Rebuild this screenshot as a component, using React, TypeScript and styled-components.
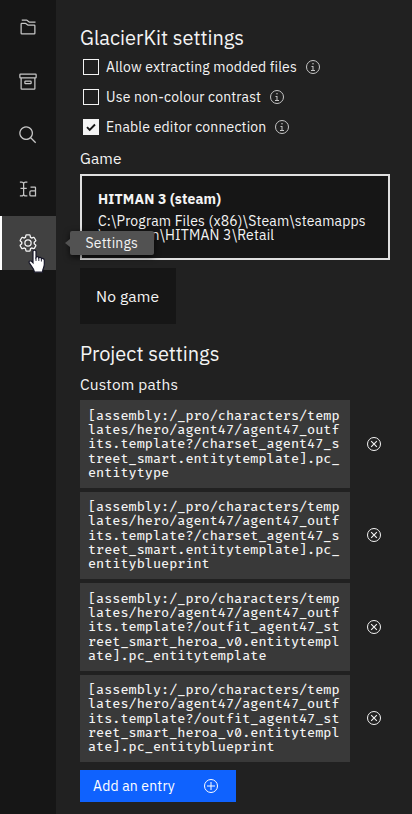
import React from "react";
import styled, { createGlobalStyle } from "styled-components";

const GlobalStyle = createGlobalStyle`
  * { box-sizing: border-box; }
  body {
    margin: 0;
    background: #212121;
    color: #f4f4f4;
    font-family: "IBM Plex Sans", "Inter", "Liberation Sans", sans-serif;
    font-size: 14px;
    overflow: hidden;
  }
`;

const Shell = styled.div`
  display: flex;
  width: 412px;
  height: 814px;
  overflow: hidden;
  background: #212121;
`;

const Rail = styled.nav`
  flex: 0 0 56px;
  display: flex;
  flex-direction: column;
  background: #161616;
`;

const RailItem = styled.div<{ $active?: boolean }>`
  position: relative;
  display: flex;
  align-items: center;
  justify-content: center;
  width: 56px;
  height: 54px;
  color: ${(p) => (p.$active ? "#f4f4f4" : "#c6c6c6")};
  background: ${(p) => (p.$active ? "#414141" : "transparent")};
  box-shadow: ${(p) => (p.$active ? "inset 2px 0 0 #ffffff" : "none")};
`;

const Tooltip = styled.div`
  position: absolute;
  z-index: 2;
  left: 70px;
  top: 15px;
  width: 83.5px;
  height: 24px;
  border-radius: 2px;
  background: #525252;
  color: #f4f4f4;
  box-shadow: 0 2px 6px rgba(0, 0, 0, 0.7);
  text-align: center;
  letter-spacing: 0.14px;
  line-height: 25px;
  &::before {
    content: "";
    position: absolute;
    left: -5px;
    top: 8px;
    border-style: solid;
    border-width: 4px 5px 4px 0;
    border-color: transparent #525252 transparent transparent;
  }
`;

const Cursor = styled.svg`
  position: absolute;
  z-index: 3;
  left: 27.5px;
  top: 33px;
`;

const Main = styled.main`
  flex: 1;
  display: flex;
  flex-direction: column;
  align-items: flex-start;
  padding: 24px 22px 0 24px;
`;

const Heading = styled.h4`
  margin: 0;
  height: 28px;
  font-size: 20px;
  font-weight: 400;
  line-height: 28px;
`;

const CheckRow = styled.label`
  display: flex;
  align-items: center;
  height: 30px;
  padding-left: 3px;
  letter-spacing: 0.16px;
  svg { margin-left: 8px; color: #c6c6c6; }
`;

const CheckBox = styled.span<{ $checked?: boolean }>`
  display: flex;
  align-items: center;
  justify-content: center;
  width: 16px;
  height: 16px;
  margin-right: 7px;
  border: 1px solid #f4f4f4;
  background: ${(p) => (p.$checked ? "#f4f4f4" : "transparent")};
  svg { margin: 0; color: #161616; }
`;

const Label = styled.div`
  height: 20px;
  margin-top: 6px;
  font-size: 15.5px;
  letter-spacing: 0.16px;
  line-height: 21px;
`;

const GameTile = styled.div`
  width: 310px;
  height: 86px;
  margin-top: 6px;
  padding: 14px 16px 0;
  border: 2px solid #e0e0e0;
  background: #161616;
`;

const GameName = styled.div`
  font-weight: 700;
  letter-spacing: 0.16px;
  line-height: 18px;
`;

const GamePath = styled.div`
  margin-top: 6px;
  letter-spacing: 0.16px;
  line-height: 14px;
  white-space: nowrap;
`;

const EmptyTile = styled.div`
  width: 96px;
  height: 56px;
  margin: 8px 0 16px;
  padding-left: 16px;
  background: #161616;
  font-size: 15.6px;
  letter-spacing: 0.16px;
  line-height: 57px;
`;

const PathList = styled.div`
  display: flex;
  flex-direction: column;
  gap: 4px;
  margin-top: 6px;
`;

const PathRow = styled.div`
  display: flex;
  align-items: center;
  gap: 16px;
`;

const PathCode = styled.code`
  width: 270px;
  height: 87.5px;
  padding: 8.5px 8px 7.5px;
  background: #393939;
  font-family: "Fira Code", "Fira Mono", "DejaVu Sans Mono", monospace;
  font-size: 13.2px;
  font-weight: 450;
  line-height: 14.35px;
  font-variant-ligatures: none;
  word-break: break-all;
`;

const AddButton = styled.button`
  display: flex;
  align-items: center;
  justify-content: space-between;
  width: 156px;
  height: 32px;
  margin-top: 8px;
  padding: 0 17px 0 13px;
  border: 0;
  background: #0f62fe;
  color: #ffffff;
  font: inherit;
  letter-spacing: 0.16px;
`;

type IconProps = { size?: number; children: React.ReactNode };

const Icon = ({ size = 20, children }: IconProps) => (
  <svg width={size} height={size} viewBox="0 0 32 32" fill="currentColor">
    {children}
  </svg>
);

const FoldersIcon = () => (
  <Icon>
    <path d="M26,28H6a2,2,0,0,1-2-2V11A2,2,0,0,1,6,9h5.67a2,2,0,0,1,1.2.4L16.33,12H26a2,2,0,0,1,2,2V26A2,2,0,0,1,26,28ZM11.67,11H6L6,26H26V14H15.67Z" />
    <path d="M28,9H17.67l-4-3H6V4h7.67a2,2,0,0,1,1.2.4L18.33,7H28Z" />
  </Icon>
);

const ArchiveIcon = () => (
  <Icon>
    <path fillRule="evenodd" d="M20,21H12a2,2,0,0,1-2-2V17a2,2,0,0,1,2-2h8a2,2,0,0,1,2,2v2A2,2,0,0,1,20,21Zm-8-4v2h8V17Z" />
    <path fillRule="evenodd" d="M28,4H4A2,2,0,0,0,2,6v4a2,2,0,0,0,2,2V28a2,2,0,0,0,2,2H26a2,2,0,0,0,2-2V12a2,2,0,0,0,2-2V6A2,2,0,0,0,28,4ZM26,28H6V12H26Zm2-18H4V6H28Z" />
  </Icon>
);

const SearchIcon = () => (
  <Icon>
    <path d="M29,27.59l-7.55-7.56a11,11,0,1,0-1.42,1.42L27.59,29ZM4,13a9,9,0,1,1,9,9A9,9,0,0,1,4,13Z" />
  </Icon>
);

const TextCursorIcon = () => (
  <Icon>
    <path d="M27,12H20v2h7v4H21a3,3,0,0,0-3,3v4a3,3,0,0,0,3,3h8V14A2,2,0,0,0,27,12Zm0,14H21a1,1,0,0,1-1-1V21a1,1,0,0,1,1-1h6Z" />
    <path d="M10,14V8a2,2,0,0,1,2-2h3V4H12a4,4,0,0,0-3,1.36A4,4,0,0,0,6,4H3V6H6A2,2,0,0,1,8,8v6H4v2H8v8a2,2,0,0,1-2,2H3v2H6a4,4,0,0,0,3-1.36A4,4,0,0,0,12,28h3V26H12a2,2,0,0,1-2-2V16h4V14Z" />
  </Icon>
);

const SettingsIcon = () => (
  <Icon>
    <path d="M27,16.76c0-.25,0-.5,0-.76s0-.51,0-.77l1.92-1.68A2,2,0,0,0,29.3,11L26.94,7a2,2,0,0,0-1.73-1,2,2,0,0,0-.64.1l-2.43.82a11.35,11.35,0,0,0-1.31-.75l-.51-2.52a2,2,0,0,0-2-1.61H13.64a2,2,0,0,0-2,1.61l-.51,2.52a11.48,11.48,0,0,0-1.32.75L7.43,6.06A2,2,0,0,0,6.79,6,2,2,0,0,0,5.06,7L2.7,11a2,2,0,0,0,.41,2.51L5,15.24c0,.25,0,.5,0,.76s0,.51,0,.77L3.11,18.45A2,2,0,0,0,2.7,21L5.06,25a2,2,0,0,0,1.73,1,2,2,0,0,0,.64-.1l2.43-.82a11.35,11.35,0,0,0,1.31.75l.51,2.52a2,2,0,0,0,2,1.61h4.72a2,2,0,0,0,2-1.61l.51-2.52a11.48,11.48,0,0,0,1.32-.75l2.42.82a2,2,0,0,0,.64.1,2,2,0,0,0,1.73-1L29.3,21a2,2,0,0,0-.41-2.51ZM25.21,24l-3.43-1.16a8.86,8.86,0,0,1-2.71,1.57L18.36,28H13.64l-.71-3.55a9.36,9.36,0,0,1-2.7-1.57L6.79,24,4.43,20l2.72-2.4a8.9,8.9,0,0,1,0-3.13L4.43,12,6.79,8l3.43,1.16a8.86,8.86,0,0,1,2.71-1.57L13.64,4h4.72l.71,3.55a9.36,9.36,0,0,1,2.7,1.57L25.21,8,27.57,12l-2.72,2.4a8.9,8.9,0,0,1,0,3.13L27.57,20Z" fillRule="evenodd" />
    <circle cx="16" cy="16" r="5" fill="none" stroke="currentColor" strokeWidth="2" />
  </Icon>
);

const InfoIcon = () => (
  <Icon size={16}>
    <path d="M17,22V14H13v2h2v6H12v2h8V22ZM16,8a1.5,1.5,0,1,0,1.5,1.5A1.5,1.5,0,0,0,16,8Z" />
    <circle cx="16" cy="16" r="13" fill="none" stroke="currentColor" strokeWidth="2" />
  </Icon>
);

const CloseIcon = () => (
  <Icon size={16}>
    <circle cx="16" cy="16" r="13" fill="none" stroke="currentColor" strokeWidth="2" />
    <path d="M10.3,10.3L21.7,21.7M21.7,10.3L10.3,21.7" stroke="currentColor" strokeWidth="2.2" />
  </Icon>
);

const AddIcon = () => (
  <Icon size={16}>
    <circle cx="16" cy="16" r="13" fill="none" stroke="currentColor" strokeWidth="2" />
    <path d="M16,8V24M8,16H24" stroke="currentColor" strokeWidth="2" />
  </Icon>
);

const RemoveButton = styled.button`
  display: flex;
  align-items: center;
  justify-content: center;
  width: 16px;
  height: 32px;
  padding: 0;
  border: 0;
  background: none;
  color: #f4f4f4;
`;

const options = [
  { text: "Allow extracting modded files", checked: false },
  { text: "Use non-colour contrast", checked: false },
  { text: "Enable editor connection", checked: true },
];

const outfits = "[assembly:/_pro/characters/templates/hero/agent47/agent47_outfits.template?";
const paths = [
  `${outfits}/charset_agent47_street_smart.entitytemplate].pc_entitytype`,
  `${outfits}/charset_agent47_street_smart.entitytemplate].pc_entityblueprint`,
  `${outfits}/outfit_agent47_street_smart_heroa_v0.entitytemplate].pc_entitytemplate`,
  `${outfits}/outfit_agent47_street_smart_heroa_v0.entitytemplate].pc_entityblueprint`,
];

export default function App() {
  return (
    <>
      <GlobalStyle />
      <Shell>
        <Rail>
          <RailItem><FoldersIcon /></RailItem>
          <RailItem><ArchiveIcon /></RailItem>
          <RailItem><SearchIcon /></RailItem>
          <RailItem><TextCursorIcon /></RailItem>
          <RailItem $active>
            <SettingsIcon />
            <Tooltip>Settings</Tooltip>
            <Cursor width="18" height="25" viewBox="0 0 18 24" preserveAspectRatio="none">
              <path
                d="M5 2.5C5 .6 8 .6 8 2.5V8c.5-.9 2.5-.8 2.8.5.7-.8 2.4-.5 2.6.8.9-.6 2.9-.1 2.9 1.5V15c0 2.5-1.8 4-1.8 7.2H6.500C6 18.500 3.500 17 1.300 13.300c-.8-1.500.9-2.600 2.200-1.500L5 13.200Z"
                fill="#fff"
                stroke="#171728"
                strokeWidth="1.2"
              />
              <path d="M8 8v3.500M10.800 8.500v3M13.400 9.300v2.700" stroke="#171728" strokeWidth=".9" />
            </Cursor>
          </RailItem>
        </Rail>
        <Main>
          <Heading>GlacierKit settings</Heading>
          {options.map((o) => (
            <CheckRow key={o.text}>
              <CheckBox $checked={o.checked}>
                {o.checked && (
                  <svg width="12" height="12" viewBox="0 0 12 12" fill="none">
                    <path d="M2 6.200L4.700 8.900L10 3.500" stroke="currentColor" strokeWidth="1.900" />
                  </svg>
                )}
              </CheckBox>
              {o.text}
              <InfoIcon />
            </CheckRow>
          ))}
          <Label>Game</Label>
          <GameTile>
            <GameName>HITMAN 3 (steam)</GameName>
            <GamePath>
              C:\Program Files (x86)\Steam\steamapps
              <br />
              \common\HITMAN 3\Retail
            </GamePath>
          </GameTile>
          <EmptyTile>No game</EmptyTile>
          <Heading>Project settings</Heading>
          <Label>Custom paths</Label>
          <PathList>
            {paths.map((p) => (
              <PathRow key={p}>
                <PathCode>{p}</PathCode>
                <RemoveButton><CloseIcon /></RemoveButton>
              </PathRow>
            ))}
          </PathList>
          <AddButton>
            Add an entry
            <AddIcon />
          </AddButton>
        </Main>
      </Shell>
    </>
  );
}
